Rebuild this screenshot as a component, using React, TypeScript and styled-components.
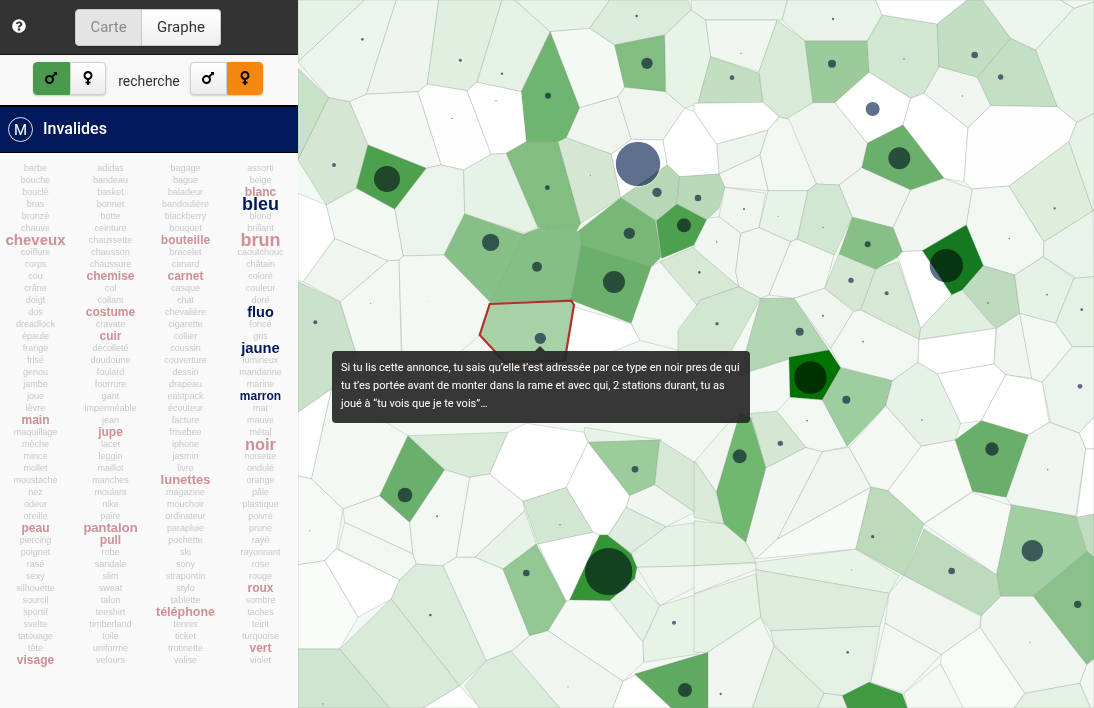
import React from 'react';
import styled, { createGlobalStyle } from 'styled-components';
import { FaMars, FaVenus, FaQuestionCircle } from 'react-icons/fa';

const Global = createGlobalStyle`
  html, body { margin: 0; padding: 0; height: 100%; background: #f8f8f8; }
  #root { height: 100%; }
  * { box-sizing: border-box; }
`;

const Page = styled.div`
  display: flex;
  width: 1094px;
  height: 708px;
  overflow: hidden;
  font-family: Roboto, "Liberation Sans", sans-serif;
`;
const Sidebar = styled.aside`
  width: 298px;
  flex: none;
  display: flex;
  flex-direction: column;
  background: #f9f9f9;
`;
const TopBar = styled.header`
  height: 55px;
  background: #333333;
  border-bottom: 1px solid #111;
  display: flex;
  align-items: center;
  padding: 0 0 0 12px;
  color: #fff;
`;
const Help = styled.span`
  display: flex;
  font-size: 14px;
  margin-top: -2px;
  margin-right: 49px;
`;
const Group = styled.div`
  display: flex;
  border-radius: 4px;
  box-shadow: 0 1px 2px rgba(0, 0, 0, 0.18);
`;
const Seg = styled.button<{ $active?: boolean; $w: number }>`
  width: ${p => p.$w}px;
  height: 37px;
  padding: 0;
  font: 15px Roboto, sans-serif;
  color: ${p => (p.$active ? '#8a8a8a' : '#333')};
  background: ${p => (p.$active ? '#e4e4e4' : 'linear-gradient(#fff, #eee)')};
  border: 1px solid #c9c9c9;
  border-left-width: 0;
  &:first-child { border-left-width: 1px; border-radius: 4px 0 0 4px; }
  &:last-child { border-radius: 0 4px 4px 0; }
`;
const Filters = styled.div`
  height: 50px;
  background: #f8f8f8;
  display: flex;
  align-items: flex-start;
  padding: 7px 0 0 33px;
`;
const Toggle = styled.button<{ $bg?: string }>`
  width: 36.5px;
  height: 33px;
  padding: 0 0 2px;
  display: flex;
  align-items: center;
  justify-content: center;
  font-size: 16px;
  color: #000;
  background: ${p => p.$bg ?? 'linear-gradient(#fff, #ececec)'};
  border: 1px solid ${p => p.$bg ?? '#cfcfcf'};
  &:first-child { border-radius: 4px 0 0 4px; }
  &:last-child { border-radius: 0 4px 4px 0; }
`;
const Label = styled.span`
  width: 84px;
  padding-left: 2px;
  text-align: center;
  font-size: 14px;
  line-height: 38px;
  color: #333;
`;
const Line = styled.div`
  height: 48px;
  background: #00195a;
  border-top: 2px solid #000;
  border-bottom: 1px solid #000;
  display: flex;
  align-items: center;
  padding-left: 8px;
  color: #fff;
`;
const MetroBadge = styled.span`
  width: 25px;
  height: 25px;
  border: 1.5px solid #dfe6f2;
  border-radius: 50%;
  display: flex;
  align-items: center;
  justify-content: center;
  font-size: 15px;
  margin-right: 10px;
`;
const LineName = styled.span`
  font-size: 16px;
  font-weight: 500;
  margin-top: -2px;
`;
const Cloud = styled.div`
  display: grid;
  grid-template-columns: repeat(4, 75px);
  padding: 9px 0 0;
  margin-left: -2px;
`;
const Column = styled.div`
  display: flex;
  flex-direction: column;
`;
const Word = styled.span<{ $size: number; $tone: number }>`
  height: 12px;
  line-height: 12px;
  text-align: center;
  white-space: nowrap;
  font-family: "Liberation Sans", Arial, sans-serif;
  font-size: ${p => p.$size}px;
  font-weight: ${p => (p.$tone ? 700 : 400)};
  color: ${p => (p.$tone === 2 ? '#00195a' : p.$tone === 1 ? '#cf9096' : '#c9c9cb')};
`;
const MapArea = styled.main`
  position: relative;
  flex: 1;
  height: 708px;
  background: #f2f8f2;
`;
const MapSvg = styled.svg`
  display: block;
  width: 796px;
  height: 708px;
`;
const Dot = styled.circle`
  fill: #5f6f8e;
  mix-blend-mode: multiply;
`;
const Ring = styled.circle`
  fill: none;
  stroke: #ffffff;
  stroke-opacity: 0.6;
`;
const Tooltip = styled.div`
  position: absolute;
  left: 34px;
  top: 351px;
  width: 418px;
  height: 72px;
  padding: 8px 9px;
  border-radius: 4px;
  background: rgba(38, 38, 38, 0.92);
  color: #fff;
  font-size: 11px;
  line-height: 18px;
  &::before {
    content: '';
    position: absolute;
    left: 203px;
    top: -5px;
    border: 5px solid transparent;
    border-top-width: 0;
    border-bottom-color: rgba(38, 38, 38, 0.92);
  }
`;

const columns: string[] = [
  'barbe bouche bouclé bras bronzé chauve cheveux:15:1 coiffure corps cou crâne doigt dos dreadlock épaule frange frisé genou jambe joue lèvre main:12:1 maquillage mèche mince mollet moustache nez odeur oreille peau:12:1 piercing poignet rasé sexy silhouette sourcil sportif svelte tatouage tête visage:12:1',
  'adidas bandeau basket bonnet botte ceinture chaussette chausson chaussure chemise:12:1 col collant costume:12:1 cravate cuir:12:1 décolleté doudoune foulard fourrure gant imperméable jean jupe:12:1 lacet leggin maillot manches moulant nike paire pantalon:13:1 pull:12:1 robe sandale slim sweat talon teeshirt timberland toile uniforme velours',
  'bagage bague baladeur bandoulière blackberry bouquet bouteille:12:1 bracelet canard carnet:12:1 casque chat chevalière cigarette collier coussin couverture dessin drapeau eastpack écouteur facture frisebee iphone jasmin livre lunettes:13:1 magazine mouchoir ordinateur parapluie pochette ski sony strapontin stylo tablette téléphone:12.5:1 tennis ticket trotinette valise',
  'assorti beige blanc:12:1 bleu:18:2 blond brillant brun:18:1 caoutchouc châtain coloré couleur doré fluo:14.5:2 foncé gris jaune:14.8:2 lumineux mandarine marine marron:12:2 mat mauve métal noir:16.4:1 noisette ondulé orange pâle plastique poivre prune rayé rayonnant rose rouge roux:12:1 sombre taches teint turquoise vert:12:1 violet',
];

type Q = 'A' | 'B' | 'C' | 'D';
const off: Record<Q, [number, number]> = { A: [0, 0], B: [396, 0], C: [0, 354], D: [396, 354] };
const pts = (q: Q, s: string) =>
  s.split(' ').map(p => {
    const [x, y] = p.split(',').map(Number);
    return `${(off[q][0] + x / 3).toFixed(1)},${(off[q][1] + y / 3).toFixed(1)}`;
  }).join(' ');

const cells: [Q, string, string][] = [
  ['A', '0,0 200,0 0,185', '#e6f2e6'],
  ['A', '200,0 295,0 205,283 155,305 92,293 0,185', '#ecf5ec'],
  ['A', '295,0 422,0 388,252 360,275 205,283', '#edf5ed'],
  ['A', '422,0 612,0 537,247 507,272 388,252', '#e0efe0'],
  ['A', '612,0 650,0 757,95 670,275 537,247', '#e4f1e4'],
  ['A', '757,95 845,323 805,413 780,425 685,425 670,275', '#6eb56f'],
  ['A', '650,0 935,0 875,85 757,95', '#e8f3e8'],
  ['A', '875,85 950,135 980,262 960,290 845,323 757,95', '#f3f9f3'],
  ['A', '935,0 1170,0 1180,30 1100,105 950,135 875,85', '#dcecdc'],
  ['A', '950,135 1100,105 1103,275 980,262', '#82bd82'],
  ['B', '-8,30 35,60 50,170 12,310 -28,325 -85,275 -88,105', '#e8f3e8'],
  ['B', '-8,0 280,0 265,60 35,60 -8,30', '#e9f3e9'],
  ['B', '35,60 250,60 195,215 50,170', '#eef6ee'],
  ['B', '50,170 195,220 207,307 12,310', '#c2dfc2'],
  ['B', '250,60 333,123 357,308 280,355 255,350 207,307 195,215', '#d8ead8'],
  ['B', '265,60 280,0 545,0 565,45 520,123 333,123', '#e9f3e9'],
  ['B', '333,123 520,123 525,217 422,308 357,308', '#9bcb9b'],
  ['B', '565,45 730,72 735,200 690,280 650,295 525,217 520,123', '#d2e7d2'],
  ['B', '545,0 820,0 730,72 565,45', '#ffffff'],
  ['B', '820,0 865,0 950,115 850,232 735,200 730,72', '#c3dfc3'],
  ['B', '950,115 1025,150 1090,320 890,317 850,232', '#c4e0c4'],
  ['B', '865,0 1100,0 1140,25 1025,150 950,115', '#ecf5ec'],
  ['B', '1140,25 1200,5 1200,340 1148,367 1090,320 1025,150', '#e8f3e8'],
  ['B', '1100,0 1200,0 1200,5 1140,25', '#eef6ee'],
  ['B', '525,217 650,295 627,375 520,430 422,308', '#ffffff'],
  ['B', '735,200 850,232 890,317 822,383 690,280', '#eff6ef'],
  ['B', '690,280 822,383 810,545 750,535 627,375 650,295', '#ffffff'],
  ['B', '890,317 1090,320 1148,367 1125,425 945,558 835,567 810,545 822,383', '#fdfefd'],
  ['B', '520,430 627,375 750,535 650,570 503,503', '#6ab06a'],
  ['B', '0,310 207,307 255,350 222,390 68,433 0,335', '#ffffff'],
  ['B', '68,433 222,390 198,465 75,522', '#ecf5ec'],
  ['B', '280,355 357,308 422,308 520,430 503,503 435,555 367,552', '#eff6ef'],
  ['B', '255,352 285,358 367,552 342,572 222,572 198,465 222,390', '#f1f7f1'],
  ['B', '75,522 198,465 222,572 92,562', '#f1f7f1'],
  ['B', '435,555 503,503 650,570 597,683 475,652', '#eff6ef'],
  ['B', '650,570 750,535 835,567 817,675 685,752 625,755 597,683', '#eef6ee'],
  ['B', '835,567 945,558 1050,725 1048,770 962,825 868,797 817,675', '#f1f7f1'],
  ['B', '945,558 1125,425 1197,633 1050,725', '#deeddc'],
  ['B', '1125,425 1148,367 1200,340 1200,630 1197,633', '#e6f2e6'],
  ['B', '1050,725 1197,633 1200,830 1148,835 1048,770', '#e9f3e9'],
  ['B', '685,752 817,675 868,797 805,870 773,885', '#14791f'],
  ['A', '0,205 92,293 0,480', '#c8e2c8'],
  ['A', '92,293 155,305 210,435 175,565 85,615 0,480', '#d3e7d3'],
  ['A', '155,305 205,283 360,275 430,495 385,505 210,435', '#f3f8f3'],
  ['A', '360,275 388,252 507,272 580,463 497,510 430,495', '#fcfdfc'],
  ['A', '507,272 537,247 670,275 685,425 625,460 580,463', '#ffffff'],
  ['A', '210,435 385,505 290,628 175,565', '#4da14d'],
  ['A', '385,505 430,495 497,510 500,642 438,765 315,768 290,628', '#eaf4eb'],
  ['A', '497,510 580,463 625,460 720,682 680,700 500,642', '#e6f2e6'],
  ['A', '625,460 685,425 780,425 848,670 835,693 730,682 720,682', '#82bd82'],
  ['A', '780,425 805,413 940,462 968,593 848,670', '#d3e7d3'],
  ['A', '805,413 845,323 960,290 1000,418 940,462', '#eff6ef'],
  ['A', '960,290 980,262 1103,275 1160,325 1095,420 1000,418', '#eff6ef'],
  ['A', '940,462 1000,418 1095,420 1108,495 968,593', '#ffffff'],
  ['B', '-93,420 -28,325 0,335 68,433 75,522 -43,530 -80,495', '#ffffff'],
  ['A', '1108,495 1145,530 1135,610 1072,662 968,593', '#b7d8b7'],
  ['B', '-43,530 75,522 92,562 75,625 40,657 -52,612', '#b9dab9'],
  ['B', '-52,612 40,660 0,735 -97,775 -113,662', '#4da14d'],
  ['A', '968,593 1072,662 1090,770 1060,800 850,735 838,695', '#77b877'],
  ['A', '677,703 730,682 848,695 850,735 818,900 578,908', '#84bf85'],
  ['A', '850,735 1060,800 1000,970 818,900', '#6ab06a'],
  ['A', '500,642 677,703 578,908 438,765', '#86c087'],
  ['B', '-103,785 0,740 135,860 20,900 0,925', '#d5e9d5'],
  ['A', '1060,800 1085,785 1205,925 1140,1050 1020,1020 1000,970', '#f1f7f1'],
  ['B', '20,900 135,860 200,895 105,1065 -48,1125 -48,990', '#d2e7d2'],
  ['B', '92,562 215,580 195,683 140,700 75,650', '#eff6ef'],
  ['B', '222,572 342,572 310,715 290,725 195,683', '#e8f3e8'],
  ['B', '342,572 367,552 435,555 475,652 420,765 310,718', '#d2e7d2'],
  ['B', '475,652 597,683 625,755 610,772 545,808 435,762', '#86c087'],
  ['B', '435,762 545,808 503,925 485,935 392,865', '#d4e8d4'],
  ['B', '545,808 612,785 680,985 675,1018 500,930', '#d6e9d6'],
  ['B', '612,770 625,755 685,752 773,885 680,985', '#ffffff'],
  ['B', '805,870 868,797 962,825 977,940 908,985 890,970', '#bcdbbc'],
  ['B', '773,885 805,870 890,970 905,985 675,1018 680,985', '#e0efe0'],
  ['B', '962,825 1048,770 1140,835 1085,970 977,940', '#e5f1e5'],
  ['B', '1140,835 1200,830 1200,1040 1135,1040 1085,970', '#e4f1e4'],
  ['B', '75,650 140,700 125,815 135,860 0,745 0,735 40,655', '#f0f7f0'],
  ['B', '140,700 195,683 290,725 225,885 200,895 135,860 125,815', '#eff6ef'],
  ['B', '290,725 310,718 420,765 392,865 300,895 225,885', '#f3f8f3'],
  ['B', '200,895 300,895 405,1050 285,1077 135,1125', '#b2d6b2'],
  ['B', '300,895 392,865 478,935 410,1045', '#eef6ee'],
  ['B', '478,935 500,930 675,1018 672,1087 595,1142 440,1102 410,1045', '#f1f7f1'],
  ['B', '675,1020 905,985 900,1092 730,1122 672,1087', '#ffffff'],
  ['B', '908,985 977,940 1015,1135 935,1124 900,1092', '#eff6ef'],
  ['B', '977,940 1085,970 1135,1040 1045,1147 1013,1135', '#f2f8f2'],
  ['B', '1135,1040 1200,1040 1200,1252 1155,1299 1070,1267 1045,1147', '#ecf5ec'],
  ['D', '1155,237 1200,190 1200,285 1175,285', '#ffffff'],
  ['D', '285,10 405,-12 440,42 385,138 288,130', '#007300'],
  ['D', '440,42 595,80 575,155 458,278 385,138', '#9ecd9f'],
  ['D', '595,80 672,25 730,60 800,208 783,258 682,277 575,155', '#e6f2e6'],
  ['D', '730,60 900,30 935,62 862,200 800,208', '#ffffff'],
  ['D', '935,62 1010,75 1045,85 1065,205 1003,243 862,200', '#ffffff'],
  ['D', '783,258 862,200 1003,243 937,430 835,412', '#69af69'],
  ['D', '1003,243 1065,205 1155,237 1175,285 1145,487 950,452 937,430', '#eff6ef'],
  ['D', '1175,285 1200,285 1200,490 1148,490', '#ffffff'],
  ['D', '950,452 1145,487 1178,590 1018,727 920,727 908,660', '#a2cfa2'],
  ['D', '1148,490 1200,480 1200,610 1178,592', '#c0dcbf'],
  ['D', '1018,727 1178,592 1200,610 1200,915 1178,932', '#8ac18a'],
  ['D', '835,415 952,455 907,662 690,510', '#f6faf6'],
  ['D', '575,155 682,277 582,410 530,398 465,280', '#f2f8f2'],
  ['D', '682,277 783,258 835,412 690,508 582,410', '#f6fbf6'],
  ['D', '530,400 582,410 690,510 630,665 485,585', '#bbdbbb'],
  ['D', '690,525 907,662 920,727 863,785 632,665', '#bcdbbc'],
  ['D', '862,785 920,727 1018,727 1178,932 1158,988 992,1018 858,820', '#eff6ef'],
  ['D', '630,665 860,787 858,820 742,902 573,808 585,718', '#eff6ef'],
  ['D', '185,625 485,585 615,665 585,718 185,647', '#e8f3e8'],
  ['D', '185,647 585,718 558,817 230,830 200,790', '#deeddb'],
  ['D', '230,830 558,817 530,985 445,1025 390,1018 240,875', '#e3f0e3'],
  ['D', '573,808 742,902 630,1018 530,985', '#f1f7f1'],
  ['D', '742,902 858,820 992,1018 960,1062 805,1062 740,930', '#f8fbf8'],
  ['D', '630,1018 740,930 808,1062 640,1062', '#f5f9f5'],
  ['D', '992,1018 1158,988 1190,1062 960,1062', '#e4f1e4'],
  ['D', '1178,932 1200,915 1200,1062 1190,1062 1158,988', '#f1f7f1'],
  ['D', '445,1025 525,985 625,1020 640,1062 455,1062', '#3f9a40'],
  ['D', '390,1018 445,1025 460,1062 370,1062', '#e6f2e6'],
  ['D', '240,875 390,1018 370,1062 175,1062', '#dfeedf'],
  ['D', '40,895 200,790 240,875 175,1062 20,1062', '#eef6ee'],
  ['D', '185,615 250,555 530,400 485,585', '#f7fbf7'],
  ['D', '250,555 530,400 465,280 385,293', '#eef6ee'],
  ['D', '155,565 215,342 335,280 385,293 250,555 185,615', '#f0f7f0'],
  ['D', '335,280 385,293 460,278 385,138 288,130 248,172', '#f1f7f1'],
  ['D', '170,178 248,172 335,280 215,342', '#d3e7d3'],
  ['D', '137,178 170,190 215,342 155,565 90,510 67,415', '#70b770'],
  ['D', '100,210 137,178 67,415 3,322', '#eef6ee'],
  ['A', '0,845 125,905 175,1062 100,1167 0,1237', '#c9e2c9'],
  ['C', '40,375 100,105 330,245 245,425 135,465', '#f2f8f2'],
  ['C', '0,175 100,105 40,375 0,365', '#ffffff'],
  ['C', '0,365 40,375 135,465 115,585 80,620 0,632', '#f6faf6'],
  ['C', '135,465 245,425 335,505 345,600 140,505', '#f3f8f3'],
  ['C', '140,505 345,600 355,630 305,678 120,585', '#f1f7f1'],
  ['C', '115,585 305,678 280,735 180,790 80,620', '#ffffff'],
  ['C', '0,632 80,620 180,790 125,885 0,885', '#fafcfa'],
  ['C', '0,885 125,885 275,1062 0,1062', '#cfe5cf'],
  ['C', '125,885 280,735 485,995 375,1062 275,1062', '#d8ebd8'],
  ['C', '280,735 305,678 355,630 435,635 565,920 485,995', '#dcecdc'],
  ['C', '245,425 330,245 440,347 335,505', '#6ab06a'],
  ['C', '330,245 630,235 575,360 515,370 440,347', '#d8ebd8'],
  ['C', '440,347 515,370 475,610 435,635 355,630 345,600 335,505', '#f1f7f1'],
  ['C', '515,370 575,360 675,442 680,470 530,610 475,610', '#f5f9f5'],
  ['C', '530,610 680,470 715,570 615,645', '#e8f3e8'],
  ['C', '435,635 475,610 530,610 615,645 695,845 640,890 565,920', '#f1f7f1'],
  ['C', '615,645 715,570 805,742 750,830 695,845', '#93c793'],
  ['C', '675,442 805,400 885,535 720,570', '#d2e7d2'],
  ['C', '575,360 630,235 685,208 858,235 870,265 805,400 675,442', '#ffffff'],
  ['C', '858,235 860,220 1090,258 870,265', '#e8f3e8'],
  ['C', '870,265 1085,258 1070,392 995,425', '#9ccc9c'],
  ['C', '805,400 870,265 995,425 985,460 930,543 905,543 885,535', '#ffffff'],
  ['C', '720,570 885,535 905,543 815,738 805,742', '#ffffff'],
  ['C', '815,738 905,543 930,543 1000,600 1017,640 1010,675 935,740', '#349535'],
  ['C', '930,545 985,460 1105,518 1000,597', '#deeddf'],
  ['C', '1000,597 1105,518 1200,505 1200,635 1017,640', '#e6f2e6'],
  ['C', '1017,640 1200,635 1200,695 1085,755', '#eff6ef'],
  ['C', '935,740 1010,675 1085,755 1035,865', '#e6f2e6'],
  ['C', '750,830 805,742 815,738 935,740 1035,865 1037,925 975,982', '#f5f9f5'],
  ['C', '1037,925 1035,865 1085,755 1200,720 1200,900', '#e8f3e8'],
  ['C', '695,845 750,830 975,982 945,1062 785,1062 640,895', '#eff6ef'],
  ['C', '500,995 565,920 640,892 785,1062 545,1062', '#dcecdc'],
  ['C', '375,1062 485,995 545,1062', '#ffffff'],
  ['C', '975,982 1010,965 1190,1062 945,1062', '#ffffff'],
  ['C', '1010,960 1230,895 1230,1062 1120,1062', '#5faa60'],
  ['C', '1085,258 1190,325 1190,475 1070,392', '#d6e9d6'],
  ['C', '995,425 1070,392 1190,475 1105,518 985,460', '#eff6ef'],
  ['D', '0,500 90,510 155,565 185,625 0,635', '#e1efe1'],
  ['D', '0,635 185,627 185,647 0,720', '#eef6ee'],
  ['D', '0,720 185,660 200,790 40,895 0,895', '#e6f2e6'],
  ['D', '0,320 67,415 90,510 0,490', '#d9ead9'],
  ['A', '127,905 270,782 303,780 310,1062 175,1062', '#f2f8f2'],
  ['A', '15,845 110,715 270,782 127,905', '#eff6ef'],
  ['A', '0,580 85,615 110,715 15,845 0,840', '#ffffff'],
  ['A', '85,615 175,565 290,628 315,768 303,780 270,782 110,715', '#f2f8f2'],
  ['A', '303,780 315,768 438,765 578,908 545,1005 480,1062 312,1062', '#f3f8f3'],
  ['A', '820,918 1000,972 1025,1022 925,1062 800,1062', '#ffffff'],
];

const dots: [Q, number, number, number][] = [
  ['A', 193, 118, 4], ['A', 487, 181, 4.5], ['A', 612, 221, 3.5], ['A', 594, 302, 2], ['A', 462, 355, 2],
  ['A', 750, 287, 9], ['A', 1016, 48, 4], ['A', 1047, 190, 17], ['B', 114, 233, 7], ['B', 141, 160, 2],
  ['B', 417, 57, 3.5], ['B', 414, 191, 12], ['B', 630, 177, 2], ['B', 842, 165, 10], ['B', 920, 231, 8],
  ['B', 805, 288, 2], ['B', 536, 327, 21], ['B', 616, 475, 33], ['B', 1082, 625, 3.5], ['B', 946, 715, 2],
  ['A', 108, 495, 6], ['A', 267, 537, 39], ['A', 748, 563, 7], ['A', 877, 526, 1.5], ['A', 1077, 577, 14],
  ['B', 12, 594, 10], ['B', -30, 676, 21], ['A', 994, 700, 17], ['A', 717, 800, 15], ['A', 948, 846, 33],
  ['A', 578, 727, 26], ['B', 16, 817, 4], ['B', 69, 971, 5], ['B', 150, 627, 3], ['B', 252, 649, 1.5],
  ['B', 387, 682, 2], ['B', 521, 733, 9], ['B', 471, 841, 8], ['B', 578, 880, 6], ['B', 882, 909, 2.5],
  ['B', 1059, 884, 2.5], ['B', 1163, 929, 4], ['B', 68, 726, 2], ['B', 317, 995, 12], ['B', 387, 947, 3],
  ['B', 507, 1025, 2.5], ['B', 757, 797, 50], ['A', 52, 967, 6], ['A', 218, 910, 1.5], ['A', 727, 1015, 17],
  ['A', 393, 903, 1], ['D', 349, 71, 49], ['D', 457, 137, 12], ['D', 684, 198, 2.5], ['D', 894, 285, 20],
  ['D', 1061, 347, 2], ['D', 1015, 590, 32], ['D', 1151, 751, 11], ['D', 536, 548, 5], ['D', 773, 651, 10],
  ['D', 1008, 865, 1.5], ['D', 473, 647, 1.5], ['D', 461, 895, 4], ['D', 339, 200, 2.5], ['D', 259, 268, 8],
  ['D', 137, 307, 21], ['D', 80, 1020, 3.5], ['D', 1158, 97, 7], ['C', 321, 423, 22], ['C', 417, 487, 3],
  ['C', 35, 530, 1.5], ['C', 397, 783, 4], ['C', 75, 1050, 2], ['C', 685, 657, 10], ['C', 786, 512, 2],
  ['C', 1011, 346, 10], ['C', 932, 653, 71], ['C', 1128, 806, 6], ['C', 810, 998, 1.5], ['C', 1161, 1008, 21],
  ['A', 1020, 492, 67],
];

const toXY = (q: Q, x: number, y: number) => ({
  cx: off[q][0] + x / 3,
  cy: off[q][1] + y / 3,
});

export default function App() {
  return (
    <Page>
      <Global />
      <Sidebar>
        <TopBar>
          <Help><FaQuestionCircle /></Help>
          <Group>
            <Seg $active $w={67}>Carte</Seg>
            <Seg $w={79}>Graphe</Seg>
          </Group>
        </TopBar>
        <Filters>
          <Group>
            <Toggle $bg="#4a9a4e"><FaMars /></Toggle>
            <Toggle><FaVenus /></Toggle>
          </Group>
          <Label>recherche</Label>
          <Group>
            <Toggle><FaMars /></Toggle>
            <Toggle $bg="#f5870f"><FaVenus /></Toggle>
          </Group>
        </Filters>
        <Line>
          <MetroBadge>M</MetroBadge>
          <LineName>Invalides</LineName>
        </Line>
        <Cloud>
          {columns.map((col, i) => (
            <Column key={i}>
              {col.split(' ').map(w => {
                const [text, size, tone] = w.split(':');
                return (
                  <Word key={text} $size={size ? Number(size) : 9} $tone={tone ? Number(tone) : 0}>
                    {text}
                  </Word>
                );
              })}
            </Column>
          ))}
        </Cloud>
      </Sidebar>
      <MapArea>
        <MapSvg viewBox="0 0 796 708" aria-label="carte">
          {cells.map(([q, s, fill], i) => (
            <polygon key={i} points={pts(q, s)} fill={fill} stroke="#7f8a7f" strokeOpacity="0.55" strokeWidth="0.5" />
          ))}
          <polygon
            points={pts('A', '575,912 820,902 828,915 800,1082 620,1086 545,1005')}
            fill="#a7d2a7"
            stroke="#b03030"
            strokeWidth="2.2"
          />
          {dots.map(([q, x, y, r], i) => (
            <Dot key={i} {...toXY(q, x, y)} r={r / 3} />
          ))}
          <Ring {...toXY('A', 1020, 492)} r={68 / 3} />
        </MapSvg>
        <Tooltip>
          Si tu lis cette annonce, tu sais qu’elle t’est adressée par ce type en noir pres de qui tu t’es portée avant de monter dans la rame et avec qui, 2 stations durant, tu as joué à “tu vois que je te vois”…
        </Tooltip>
      </MapArea>
    </Page>
  );
}
